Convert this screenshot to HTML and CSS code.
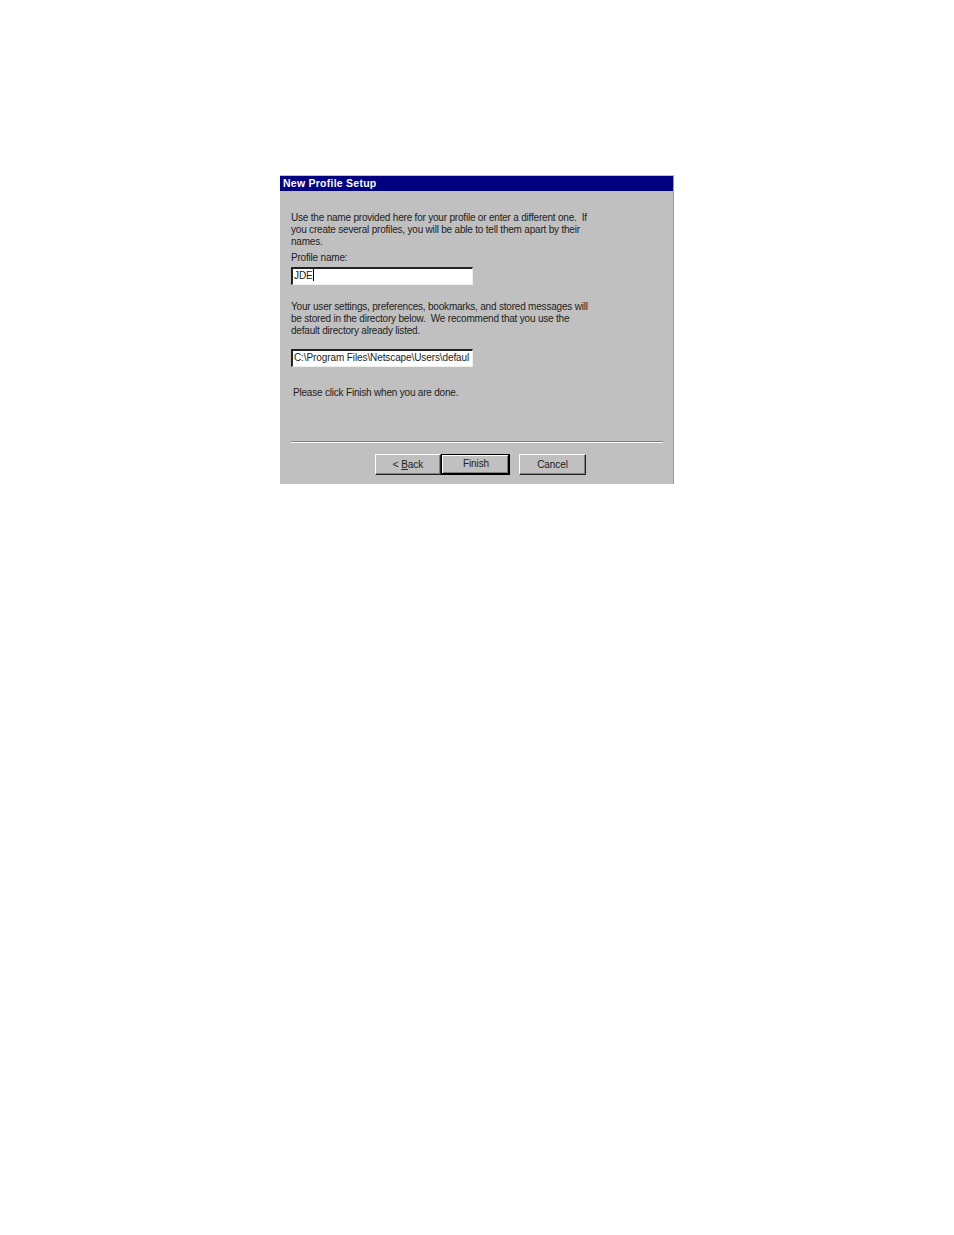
FILE: index.html
```html
<!DOCTYPE html>
<html lang="en">
<head>
    <meta charset="UTF-8">
    <title>New Profile Setup</title>
    <link rel="stylesheet" href="styles.css">
</head>
<body>

    <div class="window">
        <div class="title-bar">New Profile Setup</div>
        <div class="content">
            <p class="intro">Use the name provided here for your profile or enter a different one.&nbsp; If<br>you create several profiles, you will be able to tell them apart by their<br>names.</p>
            <p class="label">Profile name:</p>
            <div class="field">JDE<span class="caret"></span></div>
            <p class="storage">Your user settings, preferences, bookmarks, and stored messages will<br>be stored in the directory below.&nbsp; We recommend that you use the<br>default directory already listed.</p>
            <div class="field path">C:\Program Files\Netscape\Users\defaul</div>
            <p class="done">Please click Finish when you are done.</p>
            <div class="separator"></div>
            <div class="buttons">
                <button class="btn back">&lt; <u>B</u>ack</button>
                <button class="btn default">Finish</button>
                <button class="btn cancel">Cancel</button>
            </div>
        </div>
    </div>

</body>
</html>
```

FILE: styles.css
```css
body {
    margin: 0;
    padding: 175px 0 0 280px;
    background-color: #fff;
    font-family: "Liberation Sans", Arial, sans-serif;
    font-size: 10px;
    letter-spacing: -0.2px;
    line-height: 12px;
    color: #222;
}

p {
    margin: 0;
}

.window {
    width: 394px;
    height: 309px;
    box-sizing: border-box;
    background-color: #c0c0c0;
    border-top: 1px solid #c0c0c0;
    border-right: 1px solid #9a9a9a;
}

.title-bar {
    height: 15px;
    padding-left: 3px;
    background-color: #000080;
    color: #fff;
    font-weight: bold;
    font-size: 10.5px;
    line-height: 15px;
    letter-spacing: 0.25px;
}

.content {
    padding: 21px 10px 0 11px;
}

.label {
    margin-top: 4px;
}

.field {
    width: 182px;
    height: 18px;
    box-sizing: border-box;
    margin-top: 3px;
    padding-left: 1px;
    overflow: hidden;
    white-space: nowrap;
    background-color: #fff;
    border-top: 2px solid #222;
    border-left: 2px solid #222;
    border-right: 1px solid #eee;
    border-bottom: 1px solid #eee;
    line-height: 13px;
    letter-spacing: -0.1px;
}

.caret {
    display: inline-block;
    width: 1px;
    height: 12px;
    vertical-align: -2px;
    background-color: #000;
}

.storage {
    margin-top: 16px;
}

.path {
    margin-top: 12px;
}

.done {
    margin: 20px 0 0 2px;
}

.separator {
    height: 0;
    margin-top: 42px;
    border-top: 1px solid #808080;
    border-bottom: 1px solid #fff;
}

.buttons {
    display: flex;
    margin: 11px 0 0 84px;
}

.btn {
    height: 21px;
    box-sizing: border-box;
    padding: 0 0 1px;
    background-color: #c0c0c0;
    border: 1px solid;
    border-color: #fff #222 #222 #fff;
    box-shadow: inset -1px -1px 0 #808080;
    font-family: inherit;
    font-size: 10px;
    letter-spacing: -0.1px;
    color: #222;
}

.back {
    width: 66px;
}

.default {
    width: 69px;
    padding-left: 2px;
    border: 1px solid #000;
    border-right-width: 2px;
    border-bottom-width: 2px;
    box-shadow: inset 1px 1px 0 #fff, inset -1px -1px 0 #808080;
}

.cancel {
    width: 67px;
    margin-left: 9px;
}
```
